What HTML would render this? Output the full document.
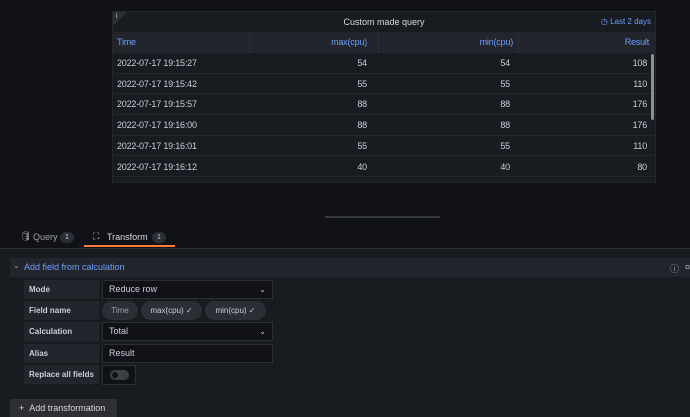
<!DOCTYPE html>
<html><head><style>
*{box-sizing:border-box;margin:0;padding:0}
body{width:690px;height:417px;background:#111217;font-family:"Liberation Sans",sans-serif;color:#ccccdc;position:relative;overflow:hidden;font-size:9px}
.abs{position:absolute}
.panel{left:112px;top:11px;width:544px;height:172px;background:#181b1f;border:1px solid #24262c;overflow:hidden}
.title{left:0;top:0;width:100%;height:20px;text-align:center;line-height:20px;font-size:9px;color:#d8d9e0}
.hdr{left:0;top:20px;width:100%;height:21px;background:#22252b;color:#6e9fff}
.row{left:0;width:100%;height:20.7px;border-bottom:1px solid #24262c;color:#ccccdc}
.c{position:absolute;top:0;line-height:20px;font-size:9px;letter-spacing:-0.2px}
.sep{position:absolute;top:0;width:1px;height:100%;background:#2b2e34}
.bottom{left:0;top:248px;width:690px;height:169px;background:#181b1f;border-top:1px solid #2b2e34}
.lab{position:absolute;left:24px;width:75px;height:19px;background:#22252b;font-size:8px;font-weight:bold;line-height:19px;padding-left:5px;color:#ccccdc}
.inp{position:absolute;left:102px;width:171px;height:19px;background:#111217;border:1px solid #2b2e34;font-size:9px;line-height:17px;padding-left:6px;color:#ccccdc}
.pill{position:absolute;top:301px;height:19px;border-radius:10px;background:#2b2e34;font-size:8px;line-height:19px;text-align:center;color:#ccccdc}
</style></head><body>
<div class="abs panel">
 <div class="abs" style="left:0;top:0;width:0;height:0;border-top:14px solid #2b2e34;border-right:14px solid transparent"></div>
 <div class="abs" style="left:3px;top:1px;font-size:7px;color:#ccc">i</div>
 <div class="abs title">Custom made query</div>
 <div class="abs" style="right:4px;top:0;line-height:20px;color:#6e9fff;font-size:8px">◷ Last 2 days</div>
 <div class="abs hdr">
  <span class="c" style="left:4px">Time</span>
  <div class="sep" style="left:136px"></div>
  <span class="c" style="right:288px">max(cpu)</span>
  <div class="sep" style="left:265px"></div>
  <span class="c" style="right:142px">min(cpu)</span>
  <div class="sep" style="left:405px"></div>
  <span class="c" style="right:6px">Result</span>
 </div>
 <div class="abs row" style="top:41px"><span class="c" style="left:4px">2022-07-17 19:15:27</span><span class="c" style="right:288px">54</span><span class="c" style="right:145px">54</span><span class="c" style="right:8px">108</span></div>
 <div class="abs row" style="top:61.7px"><span class="c" style="left:4px">2022-07-17 19:15:42</span><span class="c" style="right:288px">55</span><span class="c" style="right:145px">55</span><span class="c" style="right:8px">110</span></div>
 <div class="abs row" style="top:82.4px"><span class="c" style="left:4px">2022-07-17 19:15:57</span><span class="c" style="right:288px">88</span><span class="c" style="right:145px">88</span><span class="c" style="right:8px">176</span></div>
 <div class="abs row" style="top:103.1px"><span class="c" style="left:4px">2022-07-17 19:16:00</span><span class="c" style="right:288px">88</span><span class="c" style="right:145px">88</span><span class="c" style="right:8px">176</span></div>
 <div class="abs row" style="top:123.8px"><span class="c" style="left:4px">2022-07-17 19:16:01</span><span class="c" style="right:288px">55</span><span class="c" style="right:145px">55</span><span class="c" style="right:8px">110</span></div>
 <div class="abs row" style="top:144.5px"><span class="c" style="left:4px">2022-07-17 19:16:12</span><span class="c" style="right:288px">40</span><span class="c" style="right:145px">40</span><span class="c" style="right:8px">80</span></div>
 <div class="abs" style="right:1px;top:42px;width:3px;height:66px;background:#8e8e8e;border-radius:2px"></div>
</div>
<div class="abs" style="left:325px;top:216px;width:115px;height:2px;background:#34373d"></div>
<div class="abs" style="left:20px;top:231px;font-size:9px;color:#9fa1a8">🛢&#xFE0E;</div>
<div class="abs" style="left:33px;top:232px;font-size:9px;color:#9fa1a8">Query</div>
<div class="abs" style="left:60px;top:232px;width:14px;height:11px;border-radius:6px;background:#2b2e34;font-size:7px;text-align:center;line-height:11px">1</div>
<div class="abs" style="left:93px;top:231px;font-size:9px;color:#ccc">⛶</div>
<div class="abs" style="left:107px;top:232px;font-size:9px;color:#d8d9e0">Transform</div>
<div class="abs" style="left:152px;top:232px;width:14px;height:11px;border-radius:6px;background:#2b2e34;font-size:7px;text-align:center;line-height:11px">1</div>
<div class="abs" style="left:84px;top:245px;width:91px;height:2px;background:#ff7a3c"></div>
<div class="abs bottom"></div>
<div class="abs" style="left:10px;top:258px;width:680px;height:19px;background:#22252b"></div>
<div class="abs" style="left:13px;top:261px;font-size:8px;color:#9fa1a8">⌄</div>
<div class="abs" style="left:24px;top:262px;font-size:9px;color:#6e9fff">Add field from calculation</div>
<div class="abs" style="left:670px;top:262px;font-size:9px;color:#9fa1a8">ⓘ</div>
<div class="abs" style="left:685px;top:262px;font-size:9px;color:#9fa1a8">¤</div>
<div class="lab" style="top:280px">Mode</div><div class="inp" style="top:280px">Reduce row<span style="position:absolute;right:6px;font-size:8px">⌄</span></div>
<div class="lab" style="top:301px">Field name</div>
<div class="pill" style="left:102px;width:36px;color:#9fa1a8">Time</div>
<div class="pill" style="left:141px;width:61px">max(cpu) ✓</div>
<div class="pill" style="left:205px;width:61px">min(cpu) ✓</div>
<div class="lab" style="top:322px">Calculation</div><div class="inp" style="top:322px">Total<span style="position:absolute;right:6px;font-size:8px">⌄</span></div>
<div class="lab" style="top:344px">Alias</div><div class="inp" style="top:344px">Result</div>
<div class="lab" style="top:365px">Replace all fields</div>
<div class="abs" style="left:102px;top:365px;width:34px;height:20px;background:#111217;border:1px solid #2b2e34"></div>
<div class="abs" style="left:110px;top:370px;width:19px;height:10px;border-radius:5px;background:#3d4047"></div>
<div class="abs" style="left:112px;top:372px;width:6px;height:6px;border-radius:3px;background:#111217"></div>
<div class="abs" style="left:10px;top:399px;width:107px;height:18px;background:#2d2f35;font-size:9px;line-height:18px;padding-left:9px;color:#d8d9e0">+&nbsp;&nbsp;Add transformation</div>
</body></html>
